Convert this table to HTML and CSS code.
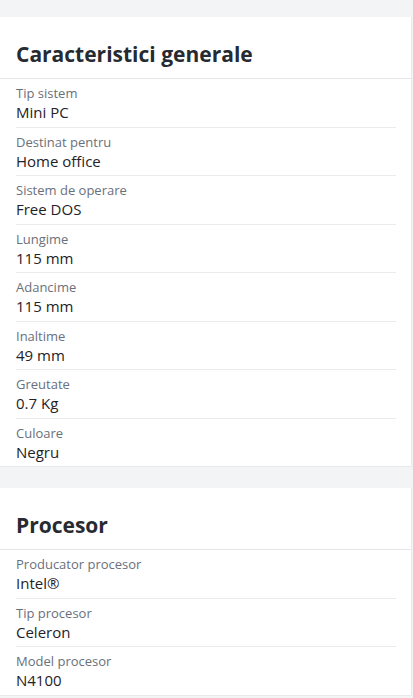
FILE: index.html
```html
<!DOCTYPE html>
<html lang="ro">
<head>
<meta charset="utf-8">
<title>Specificatii</title>
<link rel="stylesheet" href="styles.css">
</head>
<body>
<main class="page">
  <section class="card">
    <h2 class="card-title">Caracteristici generale</h2>
    <dl class="specs">
      <div class="spec"><dt>Tip sistem</dt><dd>Mini PC</dd></div>
      <div class="spec"><dt>Destinat pentru</dt><dd>Home office</dd></div>
      <div class="spec"><dt>Sistem de operare</dt><dd>Free DOS</dd></div>
      <div class="spec"><dt>Lungime</dt><dd>115 mm</dd></div>
      <div class="spec"><dt>Adancime</dt><dd>115 mm</dd></div>
      <div class="spec"><dt>Inaltime</dt><dd>49 mm</dd></div>
      <div class="spec"><dt>Greutate</dt><dd>0.7 Kg</dd></div>
      <div class="spec"><dt>Culoare</dt><dd>Negru</dd></div>
    </dl>
  </section>
  <section class="card">
    <h2 class="card-title">Procesor</h2>
    <dl class="specs">
      <div class="spec"><dt>Producator procesor</dt><dd>Intel®</dd></div>
      <div class="spec"><dt>Tip procesor</dt><dd>Celeron</dd></div>
      <div class="spec"><dt>Model procesor</dt><dd>N4100</dd></div>
    </dl>
  </section>
</main>
</body>
</html>
```
FILE: styles.css
```css
* { box-sizing: border-box; }
html, body {
  margin: 0;
  padding: 0;
  background: #f3f4f6;
  font-family: "Open Sans", "Noto Sans", sans-serif;
}
.page {
  display: flex;
  flex-direction: column;
  gap: 21px;
  padding-top: 17px;
}
.card {
  background: #fff;
  width: 412px;
  border-right: 1px solid #e8e9ec;
  border-bottom: 1px solid #e6e8eb;
}
.card-title {
  margin: 0;
  padding: 23px 16px 10px;
  font-size: 21px;
  line-height: 28px;
  font-weight: 700;
  color: #272b31;
  border-bottom: 1px solid #e4e6e9;
}
.specs {
  margin: 0 15px 0 16px;
  padding: 0;
}
.spec {
  padding: 5px 0 3px;
  border-bottom: 1px solid #e9ebee;
}
.spec:last-child {
  border-bottom: none;
}
.spec dt {
  font-size: 13px;
  line-height: 18px;
  color: #6a707b;
}
.spec dd {
  margin: 0;
  font-size: 15px;
  line-height: 21.5px;
  color: #1f2227;
}
```
